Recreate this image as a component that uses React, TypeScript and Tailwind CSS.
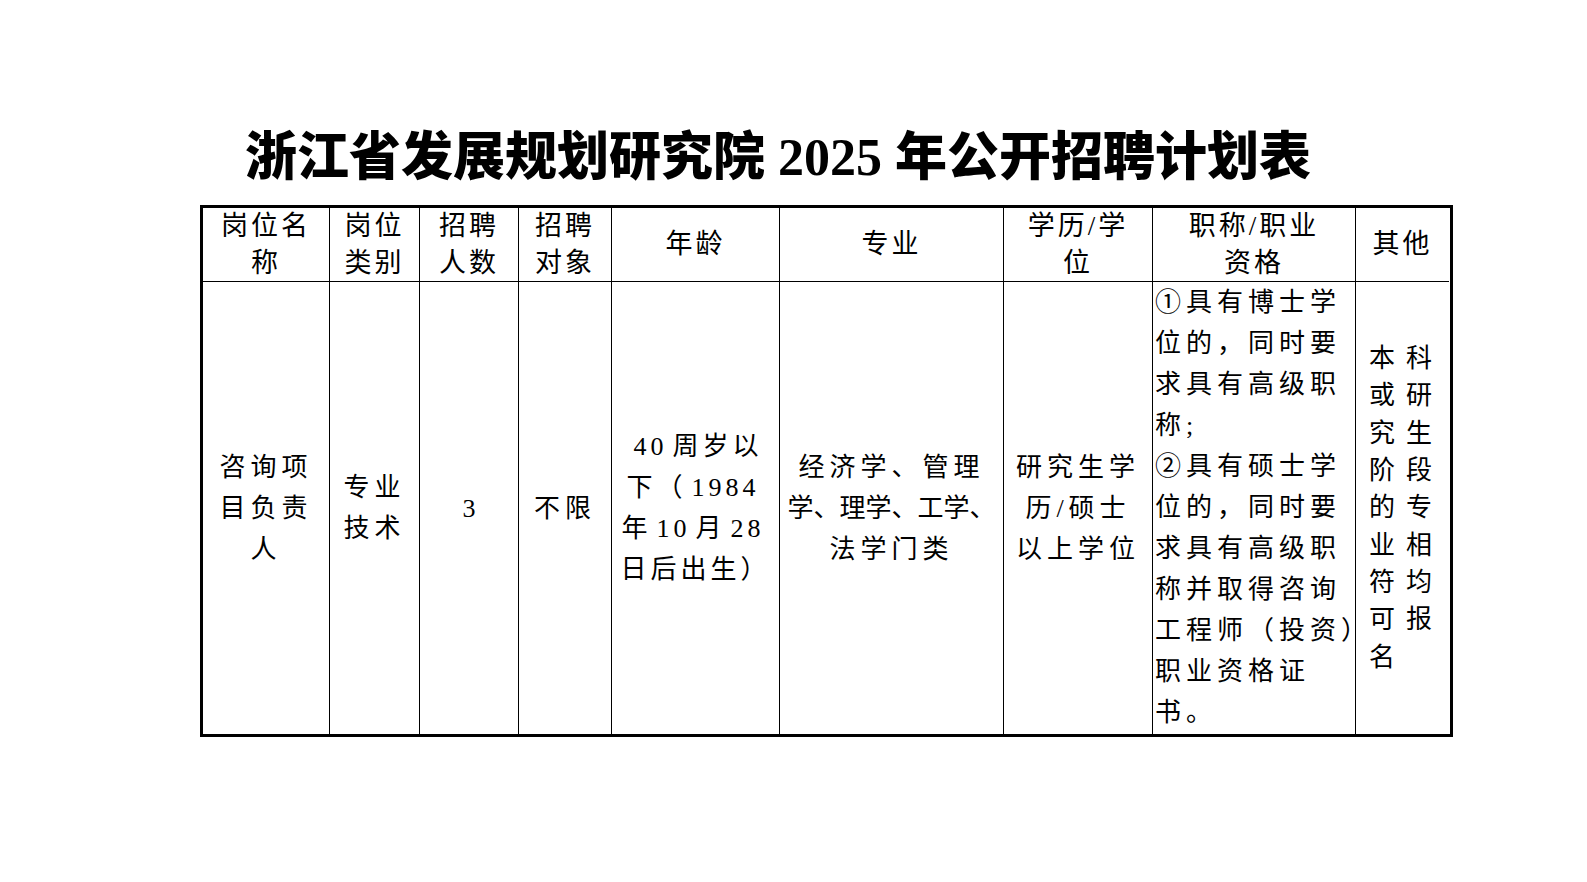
import React from "react";

const font = { fontFamily: '"Liberation Serif", "Noto Sans CJK SC", serif' };

function Lines({ lines }: { lines: React.ReactNode[] }) {
  return (
    <>
      {lines.map((l, i) => (
        <div key={i} className="whitespace-nowrap">
          {l}
        </div>
      ))}
    </>
  );
}

const headers: string[][] = [
  ["岗位名", "称"],
  ["岗位", "类别"],
  ["招聘", "人数"],
  ["招聘", "对象"],
  ["年龄"],
  ["专业"],
  ["学历/学", "位"],
  ["职称/职业", "资格"],
  ["其他"],
];

const Num = ({ children }: { children: React.ReactNode }) => (
  <span className="mx-[5px]">{children}</span>
);

function App() {
  return (
    <div className="min-h-[882px] w-[1587px] bg-white text-black" style={font}>
      <div className="pt-[125px] pl-[245px]">
        <h1 className="whitespace-nowrap text-[52px] font-black leading-[66px]">
          浙江省发展规划研究院 2025 年公开招聘计划表
        </h1>
      </div>

      <div className="ml-[200px] mt-[14px] w-[1253px] border-[3px] border-black">
        <div className="grid grid-cols-[126px_90px_99px_93px_168px_224px_149px_203px_94px]">
          {headers.map((h, i) => (
            <div
              key={i}
              className={`flex h-[73px] flex-col items-center justify-center text-center text-[27px] leading-[37px] tracking-[3px] ${
                i > 0 ? "border-l border-black" : ""
              }`}
            >
              <Lines lines={h} />
            </div>
          ))}

          {/* data row */}
          <div className="flex h-[453px] flex-col items-center justify-center border-t border-black text-center text-[26px] leading-[41px] tracking-[5px]">
            <Lines lines={["咨询项", "目负责", "人"]} />
          </div>
          <div className="flex flex-col items-center justify-center border-l border-t border-black text-center text-[26px] leading-[41px] tracking-[5px]">
            <Lines lines={["专业", "技术"]} />
          </div>
          <div className="flex flex-col items-center justify-center border-l border-t border-black text-center text-[26px] leading-[41px]">
            3
          </div>
          <div className="flex flex-col items-center justify-center border-l border-t border-black text-center text-[26px] leading-[41px] tracking-[5px]">
            不限
          </div>
          <div className="flex flex-col items-center justify-center border-l border-t border-black text-center text-[26px] leading-[41px] tracking-[4px]">
            <Lines
              lines={[
                <>
                  <Num>40</Num>周岁以
                </>,
                <>
                  下（<Num>1984</Num>
                </>,
                <>
                  年<Num>10</Num>月<Num>28</Num>
                </>,
                "日后出生）",
              ]}
            />
          </div>
          <div className="flex flex-col items-center justify-center border-l border-t border-black text-center text-[26px] leading-[41px] tracking-[5px]">
            <div className="whitespace-nowrap">经济学、管理</div>
            <div className="whitespace-nowrap tracking-normal">学、理学、工学、</div>
            <div className="whitespace-nowrap">法学门类</div>
          </div>
          <div className="flex flex-col items-center justify-center border-l border-t border-black text-center text-[26px] leading-[41px] tracking-[5px]">
            <Lines lines={["研究生学", "历/硕士", "以上学位"]} />
          </div>
          <div className="flex flex-col items-start justify-start border-l border-t border-black pl-[2px] text-[26px] leading-[41px] tracking-[5px]">
            <Lines
              lines={[
                "①具有博士学",
                "位的，同时要",
                "求具有高级职",
                "称;",
                "②具有硕士学",
                "位的，同时要",
                "求具有高级职",
                "称并取得咨询",
                "工程师（投资）",
                "职业资格证",
                "书。",
              ]}
            />
          </div>
          <div className="flex flex-col items-start justify-center border-l border-t border-black pl-[13px] text-[26px] leading-[37.3px] tracking-[11px]">
            <Lines
              lines={["本科", "或研", "究生", "阶段", "的专", "业相", "符均", "可报", "名"]}
            />
          </div>
        </div>
      </div>
    </div>
  );
}

export default App;
